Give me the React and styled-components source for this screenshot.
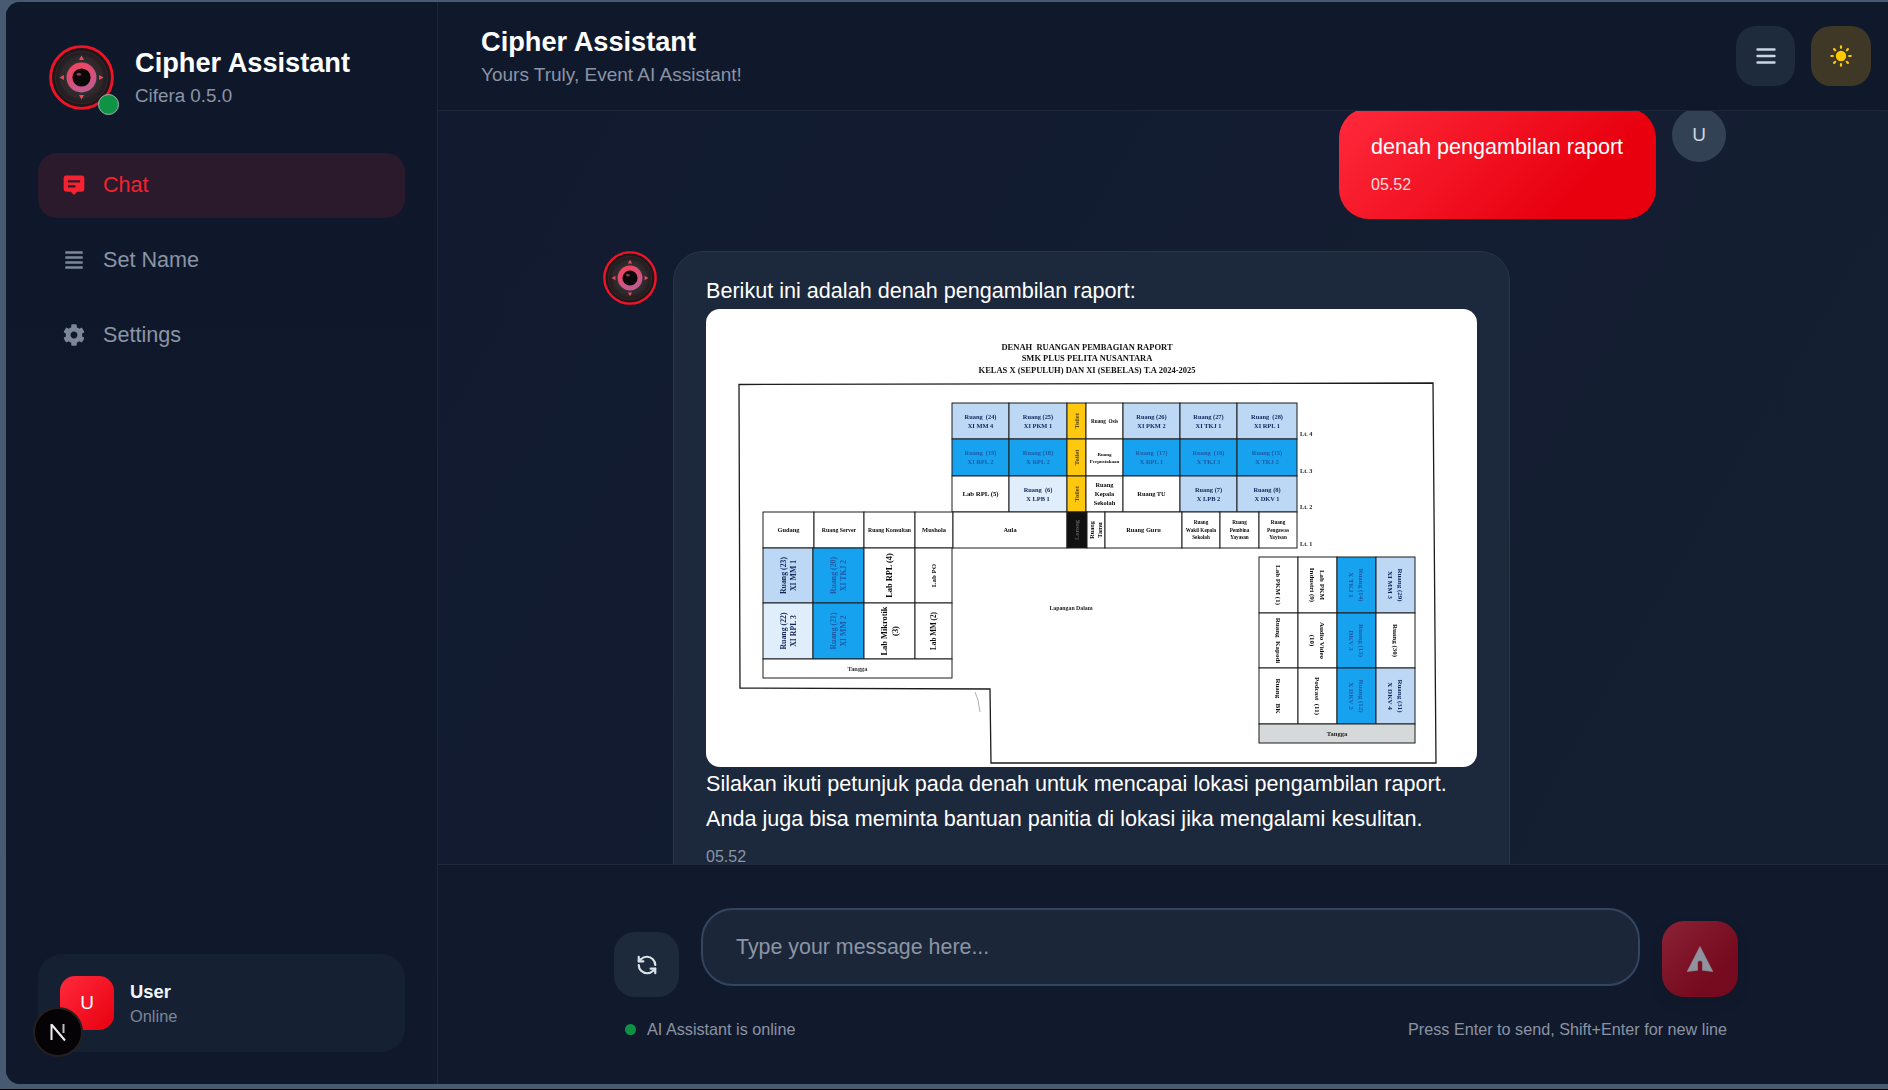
import React from 'react';
import styled, { createGlobalStyle } from 'styled-components';
import { FaCog, FaAlignJustify } from 'react-icons/fa';
import { RefreshCcw } from 'lucide-react';

const Global = createGlobalStyle`
  html, body { margin: 0; padding: 0; background: #000; }
  #root { height: 1090px; overflow: hidden; }
  * { box-sizing: border-box; }
  body { font-family: "Liberation Sans", Arial, sans-serif; }
`;

const Shell = styled.div`
  height: 1089px;
  padding: 2px 0 5px 6px;
  background: #475a72;
`;
const Frame = styled.div`
  display: flex;
  height: 100%;
  border-radius: 14px 0 0 14px;
  overflow: hidden;
  background: #0f172a;
`;
const Sidebar = styled.aside`
  position: relative;
  display: flex;
  flex-direction: column;
  width: 432px;
  flex: none;
  padding: 43px 32px 32px;
  background: linear-gradient(180deg, #0f182b, #10192c);
  border-right: 1px solid #1c2739;
`;
const Brand = styled.div`
  display: flex;
  align-items: center;
  gap: 21px;
  padding-left: 11px;
`;
const LogoWrap = styled.div`
  position: relative;
  flex: none;
  width: ${p => p.$size}px;
  height: ${p => p.$size}px;
`;
const StatusDot = styled.span`
  position: absolute;
  right: -5px;
  bottom: -5px;
  width: 21px;
  height: 21px;
  border-radius: 50%;
  background: #0e9345;
  border: 1.5px solid #a9b3ae;
`;
const BrandText = styled.div`
  display: flex;
  flex-direction: column;
`;
const Title = styled.div`
  font-size: 27.2px;
  line-height: 32px;
  font-weight: 700;
  color: #fff;
`;
const Version = styled.div`
  font-size: 18.8px;
  line-height: 24px;
  margin-top: 5px;
  color: #8b94a5;
`;
const Nav = styled.nav`
  display: flex;
  flex-direction: column;
  gap: 10px;
  margin-top: 43px;
`;
const NavItem = styled.div`
  display: flex;
  align-items: center;
  gap: 18px;
  height: 65px;
  padding: 0 0 1px 24px;
  border-radius: 19px;
  font-size: 21.6px;
  color: ${p => (p.$active ? '#f5222f' : '#8b94a5')};
  background: ${p => (p.$active ? '#2a1a2c' : 'transparent')};
`;
const NavIcon = styled.span`
  display: flex;
  justify-content: center;
  width: 23px;
  color: ${p => (p.$active ? '#f5222f' : '#7c8798')};
`;
const UserCard = styled.div`
  display: flex;
  align-items: center;
  gap: 16px;
  height: 98px;
  margin-top: auto;
  padding-left: 22px;
  border-radius: 24px;
  background: #152033;
`;
const UserAvatar = styled.div`
  display: flex;
  align-items: center;
  justify-content: center;
  width: 54px;
  height: 54px;
  border-radius: 15px;
  color: #fff;
  font-size: 19px;
  background: linear-gradient(135deg, #ff2a3c, #e8000f);
`;
const UserName = styled.div`
  font-size: 18.4px;
  line-height: 24px;
  font-weight: 700;
  color: #f1f5f9;
`;
const UserState = styled.div`
  font-size: 16.4px;
  line-height: 22px;
  margin-top: 1px;
  color: #7c8798;
`;
const NextBadge = styled.div`
  position: absolute;
  left: 27px;
  bottom: 27px;
  display: flex;
  align-items: center;
  justify-content: center;
  width: 50px;
  height: 50px;
  border-radius: 50%;
  background: #050305;
  border: 2px solid #24201f;
`;
const Main = styled.main`
  display: flex;
  flex-direction: column;
  flex: 1;
  min-width: 0;
`;
const Header = styled.header`
  display: flex;
  align-items: center;
  justify-content: space-between;
  flex: none;
  height: 109px;
  padding: 0 17px 0 43px;
  background: #10192c;
  border-bottom: 1px solid #1c2739;
`;
const HeaderText = styled.div`
  display: flex;
  flex-direction: column;
`;
const Sub = styled.div`
  font-size: 19px;
  line-height: 24px;
  margin-top: 5px;
  color: #8b94a5;
`;
const HeaderActions = styled.div`
  display: flex;
  gap: 16px;
`;
const HeadButton = styled.div`
  display: flex;
  align-items: center;
  justify-content: center;
  width: ${p => p.$w}px;
  height: 60px;
  border-radius: 20px;
  background: ${p => p.$bg};
`;
const Messages = styled.section`
  display: flex;
  flex-direction: column;
  flex: 1;
  min-height: 0;
  overflow: hidden;
  gap: 32px;
  background: linear-gradient(120deg, #111a2f, #151f32 90%);
`;
const UserRow = styled.div`
  display: flex;
  justify-content: flex-end;
  gap: 16px;
  margin-top: -3px;
  padding-right: 162px;
`;
const UserBubble = styled.div`
  width: 317px;
  height: 111px;
  padding: 21px 0 0 32px;
  border-radius: 30px;
  color: #fff;
  background: linear-gradient(135deg, #ff2a3c, #e8000f 75%);
`;
const BubbleText = styled.div`
  font-size: 21.6px;
  line-height: 35px;
  white-space: nowrap;
`;
const Time = styled.div`
  font-size: 16px;
  line-height: 20px;
  margin-top: ${p => p.$mt}px;
  color: ${p => p.$color};
`;
const SmallAvatar = styled.div`
  display: flex;
  align-items: center;
  justify-content: center;
  width: 54px;
  height: 54px;
  border-radius: 50%;
  color: #cbd5e1;
  font-size: 19px;
  background: #334155;
`;
const AiRow = styled.div`
  display: flex;
  gap: 16px;
  padding-left: 165px;
`;
const AiBubble = styled.div`
  width: 837px;
  flex: none;
  padding: 21px 32px 30px;
  border-radius: 30px;
  border: 1px solid #28354a;
  background: #1c283c;
  color: #fff;
`;
const PlanFrame = styled.div`
  width: 771px;
  height: 458px;
  margin: 1px 0 -1px;
  border-radius: 14px;
  overflow: hidden;
  background: #fff;
`;
const PlanSvg = styled.svg`
  display: block;
  width: 771px;
  height: 458px;
  filter: blur(0.25px);
  font-family: "Liberation Serif", serif;
  font-weight: 700;
`;
const Composer = styled.footer`
  flex: none;
  height: 220px;
  padding: 43px 150px 0 176px;
  background: #111a2d;
  border-top: 1px solid #1f2a3c;
`;
const InputRow = styled.div`
  display: flex;
  align-items: flex-end;
  gap: 22px;
`;
const RefreshButton = styled.div`
  display: flex;
  align-items: center;
  justify-content: center;
  flex: none;
  width: 65px;
  height: 65px;
  border-radius: 21px;
  color: #dbe2ea;
  background: #1c2a3c;
`;
const InputBox = styled.div`
  display: flex;
  align-items: center;
  flex: 1;
  height: 78px;
  margin-bottom: 11px;
  padding: 0 32px 0 33px;
  border-radius: 32px;
  border: 2px solid #334560;
  background: #1b2739;
  font-size: 21.4px;
  color: #8b95a5;
`;
const SendButton = styled.div`
  display: flex;
  align-items: center;
  justify-content: center;
  flex: none;
  width: 76px;
  height: 76px;
  border-radius: 22px;
  background: linear-gradient(135deg, #8b2235, #760a1e 70%);
  box-shadow: 0 6px 14px rgba(0, 0, 0, 0.12);
`;
const StatusRow = styled.div`
  display: flex;
  align-items: center;
  justify-content: space-between;
  margin-top: 21px;
  padding: 0 11px;
  font-size: 16.2px;
  line-height: 22px;
  color: #8b93a3;
`;
const Online = styled.div`
  display: flex;
  align-items: center;
  gap: 11px;
`;
const Dot = styled.span`
  width: 11px;
  height: 11px;
  border-radius: 50%;
  background: #0e9345;
`;

const Logo = ({ size, id, dot }) => (
  <LogoWrap $size={size}>
    <svg width={size} height={size} viewBox="0 0 100 100">
      <defs>
        <radialGradient id={`${id}b`} cx="50%" cy="50%" r="50%">
          <stop offset="0" stopColor="#4a4a4a" />
          <stop offset="1" stopColor="#161416" />
        </radialGradient>
        <linearGradient id={`${id}r`} x1="0.2" y1="0" x2="0.6" y2="1">
          <stop offset="0" stopColor="#f8415c" />
          <stop offset="1" stopColor="#bd5d94" />
        </linearGradient>
      </defs>
      <circle cx="50" cy="50" r="47.5" fill={`url(#${id}b)`} stroke="#ee1428" strokeWidth="4.5" />
      <circle cx="50" cy="50" r="40" fill="none" stroke="#7a2233" strokeWidth="0.7" />
      <circle cx="50" cy="50" r="31" fill="none" stroke="#6a2030" strokeWidth="0.7" />
      <circle cx="50" cy="50" r="23" fill={`url(#${id}r)`} />
      <circle cx="50" cy="50" r="14" fill="#0a0809" />
      <ellipse cx="46" cy="45" rx="3.4" ry="2.4" fill="#8f3d4a" />
      <path d="M50 16l4 7h-8zM50 84l4-7h-8zM16 50l7-4v8zM84 50l-7-4v8z" fill="#e8475f" />
    </svg>
    {dot && <StatusDot />}
  </LogoWrap>
);

const CL = '#bcd8f4';
const CB = '#16a2ee';
const CP = '#dfeefa';
const Y = '#fdc80d';
const NAVY = '#12265c';
const BLU = '#1f5aa8';
const INK = '#0c0c0c';
const TOILET = '#5f480c';

const rooms = [
  [952, 403, 1009, 439, CL, ['Ruang  (24)', 'XI MM 4'], 0, NAVY],
  [1009, 403, 1067, 439, CL, ['Ruang (25)', 'XI PKM 1'], 0, NAVY],
  [1067, 403, 1086, 439, Y, ['Toilet'], -90, TOILET, 6.5],
  [1086, 403, 1123, 439, '#fff', ['Ruang  Osis'], 0, INK, 5.2],
  [1123, 403, 1180, 439, CL, ['Ruang (26)', 'XI PKM 2'], 0, NAVY],
  [1180, 403, 1237, 439, CL, ['Ruang (27)', 'XI TKJ 1'], 0, NAVY],
  [1237, 403, 1297, 439, CL, ['Ruang  (28)', 'XI RPL 1'], 0, NAVY],
  [952, 439, 1009, 476, CB, ['Ruang  (19)', 'XI RPL 2'], 0, BLU],
  [1009, 439, 1067, 476, CB, ['Ruang (18)', 'X RPL 2'], 0, BLU],
  [1067, 439, 1086, 476, Y, ['Toilet'], -90, TOILET, 6.5],
  [1086, 439, 1123, 476, '#fff', ['Ruang', 'Perpustakaan'], 0, INK, 5],
  [1123, 439, 1180, 476, CB, ['Ruang  (17)', 'X RPL 1'], 0, BLU],
  [1180, 439, 1237, 476, CB, ['Ruang  (16)', 'X TKJ 3'], 0, BLU],
  [1237, 439, 1297, 476, CB, ['Ruang (15)', 'X TKJ 2'], 0, BLU],
  [952, 476, 1009, 512, '#fff', ['Lab RPL (5)'], 0, INK, 6.8],
  [1009, 476, 1067, 512, CP, ['Ruang  (6)', 'X LPB 1'], 0, NAVY],
  [1067, 476, 1086, 512, Y, ['Toilet'], -90, TOILET, 6.5],
  [1086, 476, 1123, 512, '#fff', ['Ruang', 'Kepala', 'Sekolah'], 0, INK],
  [1123, 476, 1180, 512, '#fff', ['Ruang TU'], 0, INK],
  [1180, 476, 1237, 512, CL, ['Ruang (7)', 'X LPB 2'], 0, NAVY],
  [1237, 476, 1297, 512, CL, ['Ruang (8)', 'X DKV 1'], 0, NAVY],
  [763, 512, 814, 548, '#fff', ['Gudang'], 0, INK],
  [814, 512, 864, 548, '#fff', ['Ruang Server'], 0, INK, 5.8],
  [864, 512, 915, 548, '#fff', ['Ruang Konsultan'], 0, INK, 5.7],
  [915, 512, 953, 548, '#fff', ['Mushola'], 0, INK],
  [953, 512, 1067, 548, '#fff', ['Aula'], 0, INK],
  [1067, 512, 1087, 548, '#111', ['Lorong'], -90, '#5a5a5a', 6.4],
  [1087, 512, 1105, 548, '#fff', ['Ruang', 'Tamu'], -90, INK, 6.2],
  [1105, 512, 1182, 548, '#fff', ['Ruang Guru'], 0, INK],
  [1182, 512, 1220, 548, '#fff', ['Ruang', 'Wakil Kepala', 'Sekolah'], 0, INK, 5.2],
  [1220, 512, 1259, 548, '#fff', ['Ruang', 'Pembina', 'Yayasan'], 0, INK, 5.2],
  [1259, 512, 1297, 548, '#fff', ['Ruang', 'Pengawas', 'Yaytsan'], 0, INK, 5.2],
  [763, 548, 813, 603, CL, ['Ruang (23)', 'XI MM 1'], -90, NAVY, 7.8],
  [813, 548, 864, 603, CB, ['Ruang (20)', 'XI TKJ 2'], -90, BLU, 7.8],
  [864, 548, 915, 603, '#fff', ['Lab RPL (4)'], -90, INK, 8.4],
  [915, 548, 952, 603, '#fff', ['Lab PO'], -90, INK, 7],
  [763, 603, 813, 659, CP, ['Ruang (22)', 'XI RPL 3'], -90, NAVY, 7.8],
  [813, 603, 864, 659, CB, ['Ruang (21)', 'XI MM 2'], -90, BLU, 7.8],
  [864, 603, 915, 659, '#fff', ['Lab Mikrotik', '(3)'], -90, INK, 8.4],
  [915, 603, 952, 659, '#fff', ['Lab MM (2)'], -90, INK, 7.2],
  [763, 659, 952, 678, '#fff', ['Tangga'], 0, '#333', 6.4],
  [1259, 557, 1298, 613, '#fff', ['Lab PKM (1)'], 90, INK, 7],
  [1298, 557, 1337, 613, '#fff', ['Lab PKM', 'Industri (9)'], 90, INK, 7],
  [1337, 557, 1376, 613, CB, ['Ruang (14)', 'X TKJ 1'], 90, BLU, 7],
  [1376, 557, 1415, 613, CL, ['Ruang (29)', 'XI MM 3'], 90, NAVY, 7],
  [1259, 613, 1298, 668, '#fff', ['Ruang  Kapodi'], 90, INK, 7],
  [1298, 613, 1337, 668, '#fff', ['Audio Video', '(10)'], 90, INK, 7],
  [1337, 613, 1376, 668, CB, ['Ruang (13)', 'DKV 3'], 90, BLU, 7],
  [1376, 613, 1415, 668, '#fff', ['Ruang (30)'], 90, INK, 7],
  [1259, 668, 1298, 724, '#fff', ['Ruang   BK'], 90, INK, 7],
  [1298, 668, 1337, 724, '#fff', ['Podcast  (11)'], 90, INK, 7],
  [1337, 668, 1376, 724, CB, ['Ruang (12)', 'X DKV 2'], 90, BLU, 7],
  [1376, 668, 1415, 724, CL, ['Ruang (31)', 'X DKV 4'], 90, NAVY, 7],
  [1259, 724, 1415, 743, '#d6d9d9', ['Tangga'], 0, '#222', 6.6],
];

const Room = ({ r }) => {
  const [x0, y0, x1, y1, fill, lines, rot, color, size = 6.4] = r;
  const cx = (x0 + x1) / 2;
  const cy = (y0 + y1) / 2;
  const lh = size + 2.4;
  const start = -((lines.length - 1) * lh) / 2 + size * 0.34;
  return (
    <g>
      <rect x={x0} y={y0} width={x1 - x0} height={y1 - y0} fill={fill} stroke="#1c1c1c" strokeWidth="1" />
      <g transform={`translate(${cx} ${cy}) rotate(${rot})`}>
        {lines.map((l, i) => (
          <text key={l} x="0" y={start + i * lh} textAnchor="middle" fontSize={size} fill={color} xmlSpace="preserve">
            {l}
          </text>
        ))}
      </g>
    </g>
  );
};

const FloorPlan = () => (
  <PlanSvg viewBox="706 309 771 458">
    <text x="1087" y="349.5" textAnchor="middle" fontSize="8.5" fill="#111" xmlSpace="preserve">DENAH  RUANGAN PEMBAGIAN RAPORT</text>
    <text x="1087" y="361" textAnchor="middle" fontSize="8.5" fill="#111">SMK PLUS PELITA NUSANTARA</text>
    <text x="1087" y="372.500" textAnchor="middle" fontSize="8.5" fill="#111">KELAS X (SEPULUH) DAN XI (SEBELAS) T.A 2024-2025</text>
    <path d="M739 384.5L1433 383L1436 763L991 763L990 689L740 688Z" fill="#fff" stroke="#1c1c1c" strokeWidth="1.3" />
    <path d="M975 692l3 8 1 6 1 6" fill="none" stroke="#999" strokeWidth="0.8" />
    {rooms.map((r, i) => (
      <Room key={i} r={r} />
    ))}
    <text x="1300" y="436" fontSize="6.2" fill="#222">Lt. 4</text>
    <text x="1300" y="472.5" fontSize="6.2" fill="#222">Lt. 3</text>
    <text x="1300" y="509" fontSize="6.2" fill="#222">Lt. 2</text>
    <text x="1300" y="546" fontSize="6.2" fill="#222">Lt. 1</text>
    <text x="1071" y="610" textAnchor="middle" fontSize="5.8" fill="#222">Lapangan Dalam</text>
  </PlanSvg>
);

const ChatIcon = () => (
  <svg width="22" height="20.500" viewBox="0 0 23 22">
    <path
      fillRule="evenodd"
      fill="currentColor"
      d="M3 .5h17a2.6 2.6 0 0 1 2.6 2.6v12.3a2.6 2.6 0 0 1-2.6 2.6h-5.2l-2.6 3h-1.4l-2.6-3H3A2.6 2.6 0 0 1 .4 15.4V3.1A2.6 2.6 0 0 1 3 .5zM5 5.6v2.4h13V5.6zM5 11v2.4h8V11z"
    />
  </svg>
);
const MenuIcon = () => (
  <svg width="20" height="16" viewBox="0 0 20 16">
    <path d="M1.500 1.500h17M1.500 8h17M1.500 14.500h17" stroke="#cbd5e1" strokeWidth="2.4" strokeLinecap="round" />
  </svg>
);
const SunIcon = () => (
  <svg width="22" height="22" viewBox="0 0 22 22">
    <circle cx="11" cy="11" r="5.2" fill="#ffc800" />
    <path
      d="M11 1.300v1.500M11 19.200v1.500M1.300 11h1.500M19.200 11h1.500M4.100 4.100l1.100 1.100M16.800 16.800l1.100 1.100M4.100 17.900l1.100-1.100M16.800 5.200l1.100-1.100"
      stroke="#ffc800"
      strokeWidth="2.200"
      strokeLinecap="round"
    />
  </svg>
);
const SendIcon = () => (
  <svg width="26" height="26" viewBox="0 0 26 26">
    <path
      d="M13 0.500L25.800 25.500 15.500 24.300V17a2.500 2.500 0 0 0-5 0v7.300L.2 25.500Z"
      fill="#8f939d"
      stroke="#8f939d"
      strokeWidth="0.6"
      strokeLinejoin="round"
    />
  </svg>
);

export default function App() {
  return (
    <>
      <Global />
      <Shell>
        <Frame>
          <Sidebar>
            <Brand>
              <Logo size={65} id="a" dot />
              <BrandText>
                <Title>Cipher Assistant</Title>
                <Version>Cifera 0.5.0</Version>
              </BrandText>
            </Brand>
            <Nav>
              <NavItem $active>
                <NavIcon $active><ChatIcon /></NavIcon>
                Chat
              </NavItem>
              <NavItem>
                <NavIcon><FaAlignJustify size={20} /></NavIcon>
                Set Name
              </NavItem>
              <NavItem>
                <NavIcon><FaCog size={22} /></NavIcon>
                Settings
              </NavItem>
            </Nav>
            <UserCard>
              <UserAvatar>U</UserAvatar>
              <div>
                <UserName>User</UserName>
                <UserState>Online</UserState>
              </div>
            </UserCard>
            <NextBadge>
              <svg width="20" height="20" viewBox="0 0 20 20">
                <path d="M3.500 2v16M3.500 2.500L17 18.500" stroke="#eee" strokeWidth="2" fill="none" />
                <path d="M15.500 2v9" stroke="#bbb" strokeWidth="2" fill="none" />
              </svg>
            </NextBadge>
          </Sidebar>
          <Main>
            <Header>
              <HeaderText>
                <Title>Cipher Assistant</Title>
                <Sub>Yours Truly, Event AI Assistant!</Sub>
              </HeaderText>
              <HeaderActions>
                <HeadButton $w={59} $bg="#1e2b3d"><MenuIcon /></HeadButton>
                <HeadButton $w={60} $bg="#3f3826"><SunIcon /></HeadButton>
              </HeaderActions>
            </Header>
            <Messages>
              <UserRow>
                <UserBubble>
                  <BubbleText>denah pengambilan raport</BubbleText>
                  <Time $mt={11} $color="rgba(255,255,255,0.85)">05.52</Time>
                </UserBubble>
                <SmallAvatar>U</SmallAvatar>
              </UserRow>
              <AiRow>
                <Logo size={54} id="b" />
                <AiBubble>
                  <BubbleText>Berikut ini adalah denah pengambilan raport:</BubbleText>
                  <PlanFrame><FloorPlan /></PlanFrame>
                  <BubbleText>Silakan ikuti petunjuk pada denah untuk mencapai lokasi pengambilan raport.</BubbleText>
                  <BubbleText>Anda juga bisa meminta bantuan panitia di lokasi jika mengalami kesulitan.</BubbleText>
                  <Time $mt={11} $color="#8a95a5">05.52</Time>
                </AiBubble>
              </AiRow>
            </Messages>
            <Composer>
              <InputRow>
                <RefreshButton><RefreshCcw size={22} strokeWidth={2.4} /></RefreshButton>
                <InputBox>Type your message here...</InputBox>
                <SendButton><SendIcon /></SendButton>
              </InputRow>
              <StatusRow>
                <Online><Dot />AI Assistant is online</Online>
                <span>Press Enter to send, Shift+Enter for new line</span>
              </StatusRow>
            </Composer>
          </Main>
        </Frame>
      </Shell>
    </>
  );
}
